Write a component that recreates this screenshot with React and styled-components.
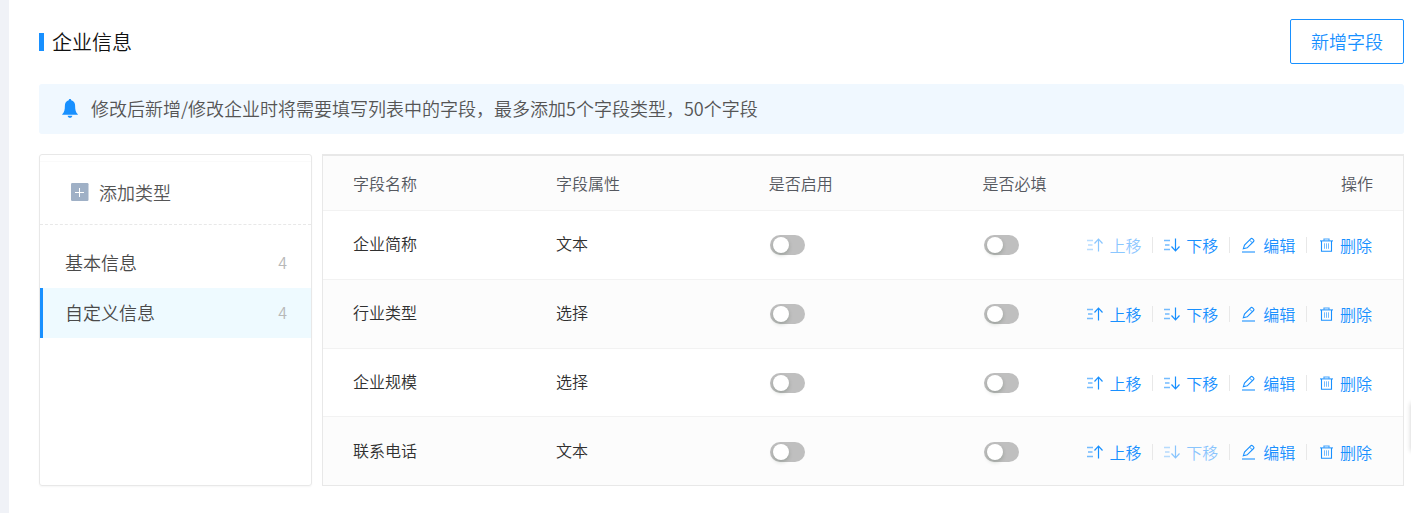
import { useState } from "react";
import styled, { createGlobalStyle } from "styled-components";

const GlobalStyle = createGlobalStyle`
  * {
    box-sizing: border-box;
  }
  body {
    margin: 0;
    background: #fff;
    font-family: "Noto Sans CJK SC", sans-serif;
    font-weight: 350;
  }
  button, input {
    font: inherit;
  }
`

const Page = styled.main`
  min-height: 100vh;
  padding: 19px 7px 27px 30px;
  border-left: 9px solid #f0f2f7;
  overflow: hidden;
`

const Header = styled.header`
  display: flex;
  align-items: center;
  justify-content: space-between;
  margin-bottom: 20px;
`

const Title = styled.h1`
  display: flex;
  align-items: center;
  gap: 8px;
  margin: 0;
  font-size: 20px;
  font-weight: 350;
  line-height: 24px;
  color: #111;

  &::before {
    content: "";
    width: 5px;
    height: 18px;
    background: #1890ff;
  }
`

const AddFieldButton = styled.button`
  height: 45px;
  padding: 0 20px 2px;
  border: 1px solid #1890ff;
  border-radius: 2px;
  background: #fff;
  color: #1890ff;
  font-size: 18px;
  line-height: 24px;
  cursor: pointer;
`

const Notice = styled.div`
  display: flex;
  align-items: center;
  gap: 12px;
  min-height: 50px;
  margin-bottom: 20px;
  padding: 0 22px 2px;
  border-radius: 3px;
  background: #f0f8ff;
  color: #555;
  font-size: 18px;
  line-height: 24px;

  p {
    margin: 0;
  }
`

const Content = styled.div`
  display: grid;
  grid-template-columns: 20% 1fr;
  column-gap: 10px;
  min-height: 332px;
`

const Sidebar = styled.aside`
  padding-top: 6px;
  border: 1px solid #e8e8e8;
  border-radius: 3px;
  box-shadow: 0 1px 2px rgba(0, 0, 0, 0.04);
`

const AddTypeButton = styled.button`
  display: flex;
  align-items: center;
  gap: 10px;
  width: 100%;
  height: 64px;
  padding: 0 30px 2px;
  border: 0;
  border-top: 1px solid #fafafa;
  border-bottom: 1px dashed #e8e8e8;
  background: none;
  color: #555;
  font-size: 18px;
  line-height: 24px;
  cursor: pointer;
`

const TypeList = styled.ul`
  margin: 13px 0 0;
  padding: 0;
  list-style: none;
`

const TypeItem = styled.button`
  display: flex;
  align-items: center;
  justify-content: space-between;
  width: 100%;
  height: 50px;
  padding: 0 24px 2px 22px;
  border: 0;
  border-left: 3px solid ${({ $active }) => ($active ? "#1890ff" : "transparent")};
  background: ${({ $active }) => ($active ? "#eefaff" : "none")};
  color: #4a4a4a;
  font-size: 18px;
  line-height: 24px;
  cursor: pointer;
`

const Count = styled.span`
  color: #b8b8b8;
  font-size: 16px;
`

const Table = styled.table`
  width: 100%;
  table-layout: fixed;
  border: 1px solid #e8e8e8;
  border-top-width: 2px;
  border-collapse: separate;
  border-spacing: 0;
  font-size: 16px;
  line-height: 24px;
`

const Th = styled.th`
  width: ${({ $width }) => $width || "auto"};
  height: 55px;
  padding: 0 30px;
  border-bottom: 1px solid #f2f2f2;
  background: #fcfcfc;
  color: #55585f;
  font-weight: 350;
  text-align: ${({ $align }) => $align || "left"};
  white-space: nowrap;
`

const Td = styled.td`
  padding: 18px 30px 21px;
  color: #303030;
`

const Tr = styled.tr`
  &:nth-child(even) {
    background: #fcfcfc;
  }
  &:not(:last-child) ${Td} {
    border-bottom: 1px solid #f2f2f2;
  }
`

const Switch = styled.input`
  appearance: none;
  display: block;
  width: 35px;
  height: 20px;
  margin: 4px 1px 0;
  padding: 2px 3px;
  border-radius: 10px;
  background: ${({ checked }) => (checked ? "#1890ff" : "#bfbfbf")};
  cursor: pointer;

  &::before {
    content: "";
    display: block;
    width: 16px;
    height: 16px;
    margin-left: ${({ checked }) => (checked ? "13px" : "0")};
    border-radius: 50%;
    background: #fff;
    box-shadow: 0 2px 4px rgba(0, 35, 11, 0.2);
  }
`

const Actions = styled.div`
  display: flex;
  align-items: center;
  justify-content: flex-end;
  padding: 4px 1px 0 0;
`

const Action = styled.button`
  display: flex;
  align-items: center;
  gap: 6px;
  padding: 0;
  border: 0;
  background: none;
  color: #1890ff;
  opacity: ${({ disabled }) => (disabled ? 0.5 : 1)};
  white-space: nowrap;
  cursor: pointer;

  svg {
    flex: none;
  }
`

const Divider = styled.span`
  width: 1px;
  height: 16px;
  margin: 0 11px;
  background: #e8e8e8;
`

/* edge of the floating help tab that is docked outside the window */
const DockedTab = styled.div`
  position: fixed;
  top: 403px;
  right: -40px;
  width: 40px;
  height: 48px;
  box-shadow: 0 0 5px rgba(0, 0, 0, 0.2);
`

const BellIcon = () => (
  <svg width="18" height="20" viewBox="0 0 18 20" fill="#1890ff" aria-hidden="true">
    <path d="M9 1c.8 0 1.200.5 1.200 1.200 2.700.7 3.900 2.700 3.900 5.300 0 4.400.6 7 2.700 8.700v.5H1.200v-.5c2.100-1.700 2.700-4.300 2.700-8.700 0-2.600 1.200-4.600 3.900-5.300 0-.7.4-1.200 1.200-1.200z" />
    <path d="M6.700 17.700h4.600c-.2 1.300-1.100 2.100-2.300 2.100s-2.100-.8-2.300-2.100z" />
  </svg>
)

const PlusIcon = () => (
  <svg width="19" height="18" viewBox="0 0 19 18" aria-hidden="true">
    <rect x="1" width="17.500" height="18" rx="1.200" fill="#9fb0c6" />
    <path d="M5 9.500h9M9.500 5v9" stroke="#fff" strokeWidth="1" />
  </svg>
)

const UpIcon = () => (
  <svg width="16" height="14" viewBox="0 0 16 14" fill="none" stroke="currentColor" aria-hidden="true">
    <path d="M0 2.500h6M1 7h4.500M0 11.500h6" strokeWidth="1.300" opacity="0.6" />
    <path d="M11.500 13.500V1.500M7.500 5.500l4-4.300 4 4.300" strokeWidth="1.200" />
  </svg>
)

const DownIcon = () => (
  <svg width="16" height="14" viewBox="0 0 16 14" fill="none" stroke="currentColor" aria-hidden="true">
    <path d="M0 2.500h6M1 7h4.500M0 11.500h6" strokeWidth="1.300" opacity="0.6" />
    <path d="M11.500 .5v12M7.500 8.500l4 4.300 4-4.300" strokeWidth="1.200" />
  </svg>
)

const EditIcon = () => (
  <svg width="16" height="16" viewBox="0 0 16 16" fill="none" stroke="currentColor" aria-hidden="true">
    <path d="M2.300 11.800l1.200-3.800 6.200-6.200c.6-.6 1.300-.6 1.900 0l1 1c.5.5.5 1.200 0 1.700l-6.400 6.300z" strokeWidth="1.100" />
    <path d="M8.700 3.200l2.500 2.500" strokeWidth="1" />
    <path d="M1 15h13" strokeWidth="1.800" opacity="0.6" />
  </svg>
)

const DeleteIcon = () => (
  <svg width="16" height="14" viewBox="0 0 16 14" fill="none" stroke="currentColor" aria-hidden="true">
    <path d="M2 2.800h13M6 2.500V1h5v1.500" strokeWidth="1.200" opacity="0.8" />
    <path d="M3.500 3v10.300h10V3" strokeWidth="1.100" />
    <path d="M6.500 5.300v5.500M8.500 5.300v5.500M10.500 5.300v5.500" strokeWidth="1" opacity="0.6" />
  </svg>
)

const types = [
  { name: "基本信息", count: 4 },
  { name: "自定义信息", count: 4 },
]

const initialFields = [
  { name: "企业简称", attr: "文本", enabled: false, required: false },
  { name: "行业类型", attr: "选择", enabled: false, required: false },
  { name: "企业规模", attr: "选择", enabled: false, required: false },
  { name: "联系电话", attr: "文本", enabled: false, required: false },
]

export default function App() {
  const [activeType, setActiveType] = useState("自定义信息");
  const [fields, setFields] = useState(initialFields);

  const toggle = (index, key) => {
    setFields(fields.map((field, i) => (i === index ? { ...field, [key]: !field[key] } : field)));
  };

  const move = (index, step) => {
    const next = [...fields];
    [next[index], next[index + step]] = [next[index + step], next[index]];
    setFields(next);
  };

  const remove = (index) => {
    setFields(fields.filter((_, i) => i !== index));
  };

  return (
    <Page>
      <GlobalStyle />
      <Header>
        <Title>企业信息</Title>
        <AddFieldButton type="button">新增字段</AddFieldButton>
      </Header>

      <Notice>
        <BellIcon />
        <p>修改后新增/修改企业时将需要填写列表中的字段，最多添加5个字段类型，50个字段</p>
      </Notice>

      <Content>
        <Sidebar>
          <AddTypeButton type="button">
            <PlusIcon />
            添加类型
          </AddTypeButton>
          <TypeList>
            {types.map((type) => (
              <li key={type.name}>
                <TypeItem
                  type="button"
                  $active={type.name === activeType}
                  onClick={() => setActiveType(type.name)}
                >
                  {type.name}
                  <Count>{type.count}</Count>
                </TypeItem>
              </li>
            ))}
          </TypeList>
        </Sidebar>

        <Table>
          <thead>
            <tr>
              <Th $width="18.8%">字段名称</Th>
              <Th $width="19.7%">字段属性</Th>
              <Th $width="19.8%">是否启用</Th>
              <Th>是否必填</Th>
              <Th $width="32%" $align="right">操作</Th>
            </tr>
          </thead>
          <tbody>
            {fields.map((field, index) => (
              <Tr key={field.name}>
                <Td>{field.name}</Td>
                <Td>{field.attr}</Td>
                <Td>
                  <Switch
                    type="checkbox"
                    aria-label="是否启用"
                    checked={field.enabled}
                    onChange={() => toggle(index, "enabled")}
                  />
                </Td>
                <Td>
                  <Switch
                    type="checkbox"
                    aria-label="是否必填"
                    checked={field.required}
                    onChange={() => toggle(index, "required")}
                  />
                </Td>
                <Td>
                  <Actions>
                    <Action type="button" disabled={index === 0} onClick={() => move(index, -1)}>
                      <UpIcon />
                      上移
                    </Action>
                    <Divider />
                    <Action
                      type="button"
                      disabled={index === fields.length - 1}
                      onClick={() => move(index, 1)}
                    >
                      <DownIcon />
                      下移
                    </Action>
                    <Divider />
                    <Action type="button">
                      <EditIcon />
                      编辑
                    </Action>
                    <Divider />
                    <Action type="button" onClick={() => remove(index)}>
                      <DeleteIcon />
                      删除
                    </Action>
                  </Actions>
                </Td>
              </Tr>
            ))}
          </tbody>
        </Table>
      </Content>
      <DockedTab />
    </Page>
  )
}
